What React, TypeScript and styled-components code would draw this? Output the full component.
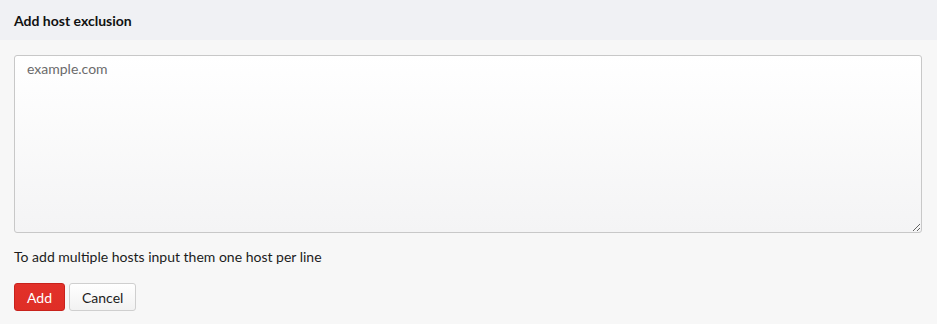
import styled, { createGlobalStyle } from "styled-components";

const GlobalStyle = createGlobalStyle`
  html, body {
    margin: 0;
    padding: 0;
    background: #f7f7f7;
  }
  body {
    font-family: Lato, "Liberation Sans", sans-serif;
    color: #1c1c1c;
  }
`;

const Panel = styled.div`
  width: 937px;
  height: 324px;
  display: flex;
  flex-direction: column;
  background: #f7f7f7;
`;

const Header = styled.div`
  height: 40px;
  display: flex;
  align-items: center;
  padding: 0 14px;
  background: #f0f1f4;
  font-size: 14px;
  font-weight: 700;
  color: #111;
`;

const Body = styled.div`
  display: flex;
  flex-direction: column;
  padding: 15px 15px 0 14px;
`;

const HostInput = styled.textarea`
  box-sizing: border-box;
  width: 908px;
  height: 178px;
  padding: 4px 12px;
  border: 1px solid #c8c8c8;
  border-radius: 3px;
  background: linear-gradient(to bottom, #ffffff 0%, #f4f4f5 100%);
  font-family: inherit;
  font-size: 14px;
  color: #222;
  outline: none;

  &::placeholder {
    color: #6b6b6b;
  }
`;

const Hint = styled.div`
  margin-top: 15px;
  font-size: 14px;
  color: #1c1c1c;
`;

const Actions = styled.div`
  display: flex;
  gap: 4px;
  margin-top: 18px;
`;

const Button = styled.button<{ $primary?: boolean }>`
  box-sizing: border-box;
  height: 28px;
  padding: 0 12px;
  border-radius: 3px;
  font-family: inherit;
  font-size: 14px;
  cursor: pointer;
  border: 1px solid ${({ $primary }) => ($primary ? "#c8221c" : "#cfcfcf")};
  background: ${({ $primary }) =>
    $primary
      ? "linear-gradient(to bottom, #e2312a 0%, #df2e26 100%)"
      : "linear-gradient(to bottom, #ffffff 0%, #f2f2f2 100%)"};
  color: ${({ $primary }) => ($primary ? "#ffffff" : "#1c1c1c")};
`;

const App = () => (
  <>
    <GlobalStyle />
    <Panel>
      <Header>Add host exclusion</Header>
      <Body>
        <HostInput placeholder="example.com" />
        <Hint>To add multiple hosts input them one host per line</Hint>
        <Actions>
          <Button $primary style={{ width: 51 }}>Add</Button>
          <Button style={{ width: 67 }}>Cancel</Button>
        </Actions>
      </Body>
    </Panel>
  </>
);

export default App;
